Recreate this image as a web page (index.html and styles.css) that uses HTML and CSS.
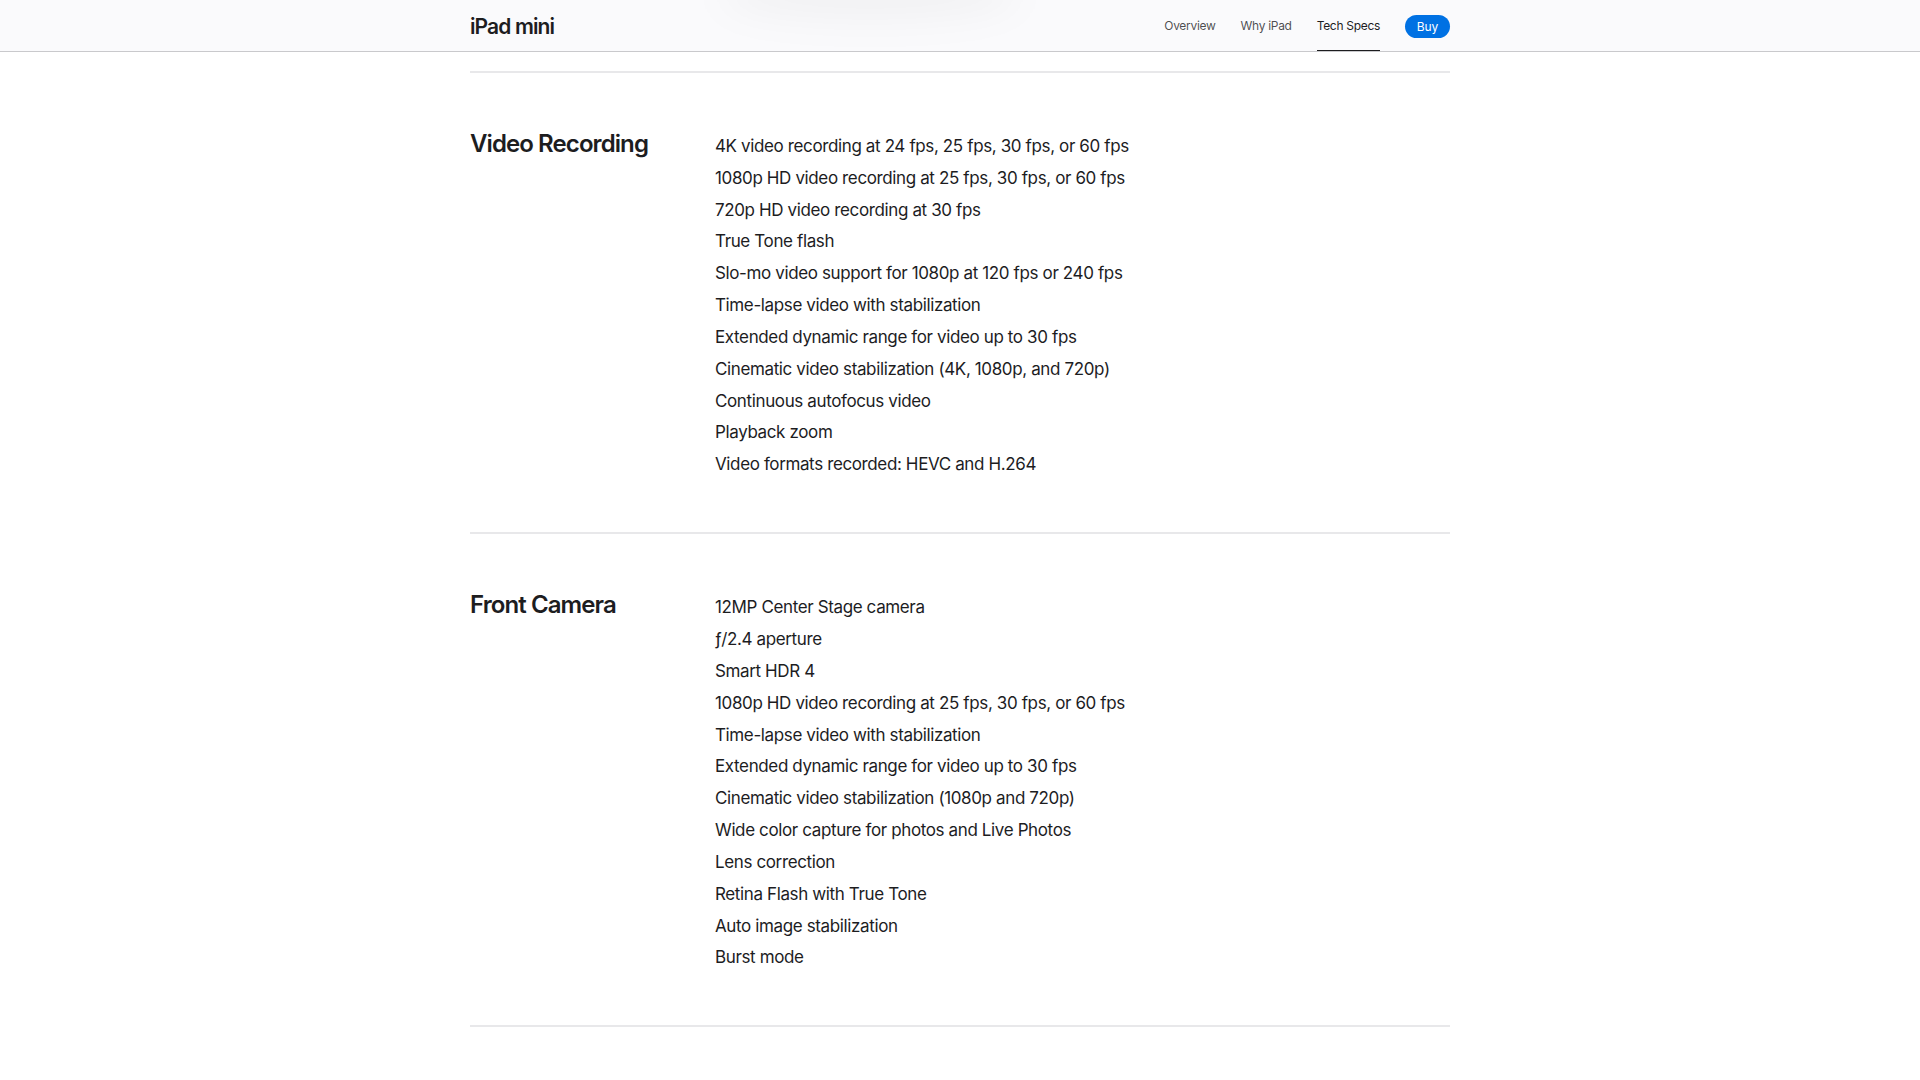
FILE: index.html
```html
<!DOCTYPE html>
<html lang="en">
<head>
<meta charset="utf-8">
<title>iPad mini - Tech Specs</title>
<link rel="stylesheet" href="styles.css">
</head>
<body>
<nav class="localnav">
  <div class="nav-glow"></div>
  <div class="nav-inner">
    <a class="nav-title" href="#">iPad mini</a>
    <ul class="nav-menu">
      <li><a class="nav-link" href="#">Overview</a></li>
      <li><a class="nav-link" href="#">Why iPad</a></li>
      <li><a class="nav-link current" href="#">Tech Specs</a></li>
      <li><a class="nav-buy" href="#">Buy</a></li>
    </ul>
  </div>
</nav>
<main class="specs">
  <section class="spec-section">
    <h2 class="spec-title">Video Recording</h2>
    <ul class="spec-list">
      <li>4K video recording at 24 fps, 25 fps, 30 fps, or 60 fps</li>
      <li>1080p HD video recording at 25 fps, 30 fps, or 60 fps</li>
      <li>720p HD video recording at 30 fps</li>
      <li>True Tone flash</li>
      <li>Slo-mo video support for 1080p at 120 fps or 240 fps</li>
      <li>Time-lapse video with stabilization</li>
      <li>Extended dynamic range for video up to 30 fps</li>
      <li>Cinematic video stabilization (4K, 1080p, and 720p)</li>
      <li>Continuous autofocus video</li>
      <li>Playback zoom</li>
      <li>Video formats recorded: HEVC and H.264</li>
    </ul>
  </section>
  <section class="spec-section">
    <h2 class="spec-title">Front Camera</h2>
    <ul class="spec-list">
      <li>12MP Center Stage camera</li>
      <li>ƒ/2.4 aperture</li>
      <li>Smart HDR 4</li>
      <li>1080p HD video recording at 25 fps, 30 fps, or 60 fps</li>
      <li>Time-lapse video with stabilization</li>
      <li>Extended dynamic range for video up to 30 fps</li>
      <li>Cinematic video stabilization (1080p and 720p)</li>
      <li>Wide color capture for photos and Live Photos</li>
      <li>Lens correction</li>
      <li>Retina Flash with True Tone</li>
      <li>Auto image stabilization</li>
      <li>Burst mode</li>
    </ul>
  </section>
  <section class="spec-section"></section>
</main>
</body>
</html>
```

FILE: styles.css
```css
* { box-sizing: border-box; }
html, body { margin: 0; padding: 0; }
body {
  background: #fff;
  color: #1d1d1f;
  font-family: Inter, "Noto Sans", "Liberation Sans", sans-serif;
  overflow: hidden;
}
a { text-decoration: none; color: inherit; }
ul { list-style: none; margin: 0; padding: 0; }

.localnav {
  position: relative;
  height: 52px;
  background: #fafafc;
  border-bottom: 1px solid #c9c9cc;
  overflow: hidden;
}
.nav-glow {
  position: absolute;
  left: 720px;
  top: -30px;
  width: 300px;
  height: 50px;
  border-radius: 50%;
  background: rgba(0, 0, 0, 0.035);
  filter: blur(18px);
}
.nav-inner {
  position: relative;
  width: 980px;
  margin: 0 auto;
  height: 51px;
  display: flex;
  align-items: center;
  justify-content: space-between;
}
.nav-title {
  font-size: 21px;
  font-weight: 600;
  letter-spacing: -0.042em;
  color: #1d1d1f;
  margin-top: 1px;
}
.nav-menu {
  display: flex;
  align-items: center;
  height: 100%;
  gap: 25px;
}
.nav-menu li { height: 100%; display: flex; align-items: center; }
.nav-link {
  font-size: 12px;
  letter-spacing: -0.025em;
  color: rgba(29, 29, 31, 0.8);
  height: 100%;
  display: flex;
  align-items: center;
  border-bottom: 1px solid transparent;
  padding-top: 1px;
}
.nav-link.current {
  color: #1d1d1f;
  border-bottom-color: #1d1d1f;
}
.nav-buy {
  font-size: 12px;
  color: #fff;
  background: #0071e3;
  border-radius: 12px;
  height: 23px;
  width: 45px;
  display: flex;
  align-items: center;
  justify-content: center;
  margin-top: 1px;
}

.specs {
  width: 980px;
  margin: 0 auto;
  padding-top: 19px;
}
.spec-section {
  border-top: 2px solid #e8e8ea;
  display: flex;
  padding: 57px 0 55px;
}
.spec-title {
  width: 245px;
  flex: none;
  margin: 0;
  font-size: 24px;
  line-height: 28px;
  font-weight: 600;
  letter-spacing: -0.038em;
  color: #1d1d1f;
}
.spec-list {
  padding-top: 4px;
}
.spec-list li {
  font-size: 17px;
  line-height: 25px;
  letter-spacing: -0.022em;
  color: #1d1d1f;
}
.spec-list li + li { margin-top: 6.84px; }
```
